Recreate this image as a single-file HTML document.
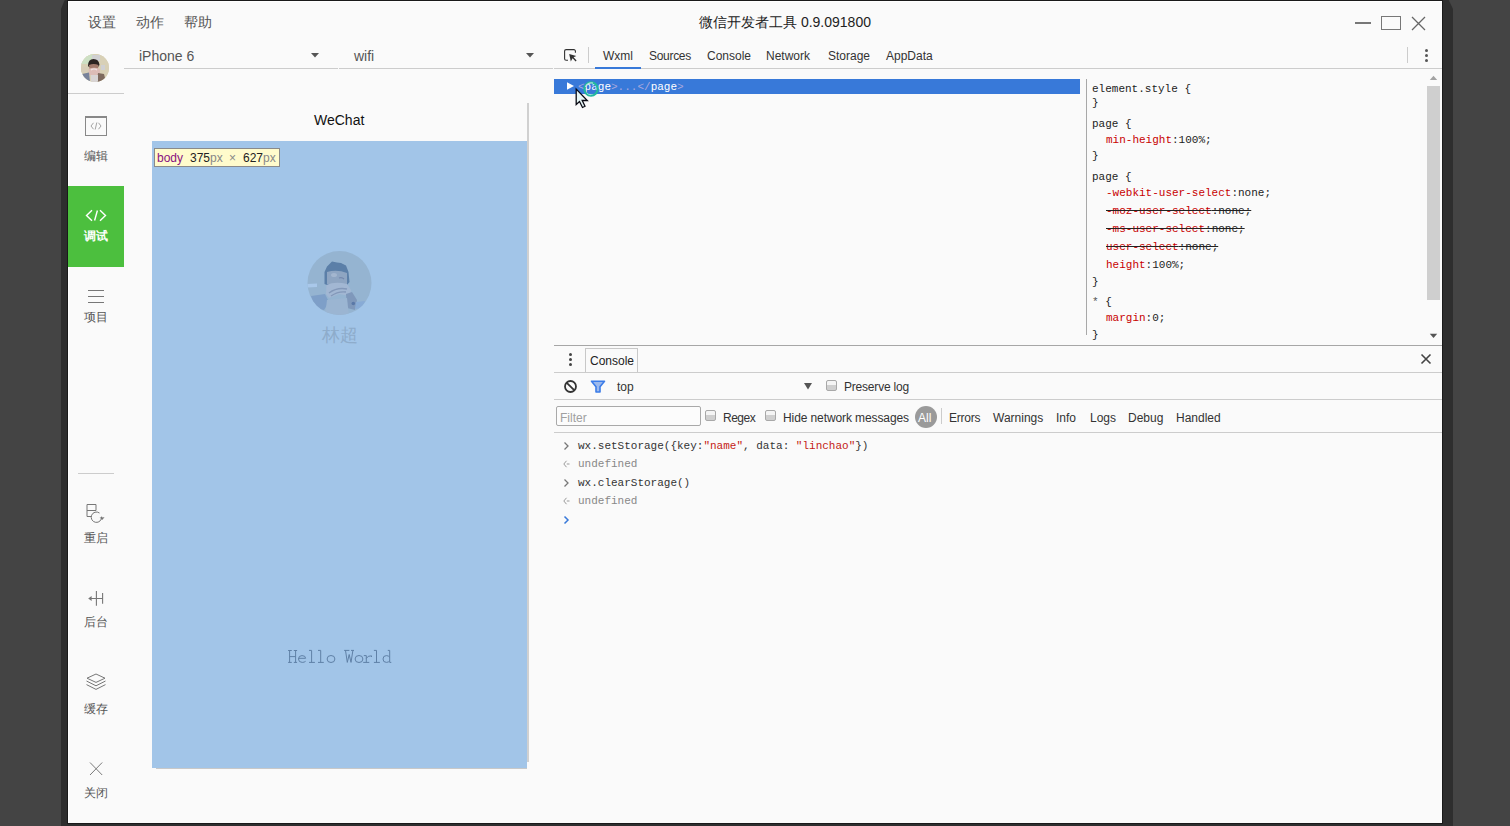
<!DOCTYPE html>
<html><head><meta charset="utf-8">
<style>
*{margin:0;padding:0;box-sizing:border-box}
html,body{width:1510px;height:826px;overflow:hidden;background:#444;font-family:"Liberation Sans",sans-serif;color:#555}
.a{position:absolute}
.t{position:absolute;white-space:nowrap;line-height:1}
.mono{font-family:"Liberation Mono",monospace}
.hl{position:absolute;height:1px;background:#ccc}
.cb{width:11px;height:11px;border:1px solid #a8a8a8;border-radius:2px;background:linear-gradient(#f4f4f4 0,#f4f4f4 45%,#cfcfcf 50%,#cfcfcf 100%)}
.vl{position:absolute;width:1px;background:#ccc}
</style></head><body>
<!-- shadow -->
<div class="a" style="left:61px;top:0;width:1392px;height:826px;background:#2e2e2e;clip-path:polygon(3.7px 0,1387.7px 0,1392px 9px,1392px 826px,0 826px,0 9px)"></div>
<!-- window -->
<div class="a" style="left:67px;top:0;width:1376px;height:824px;background:#1a1a1a"></div>
<div id="win" class="a" style="left:68px;top:1px;width:1374px;height:822px;background:#fafafa;border-left:1px solid #fff;border-top:1px solid #fff"></div>

<!-- title bar menu -->
<div class="t" style="left:88px;top:15px;font-size:14px;color:#555">设置</div>
<div class="t" style="left:136px;top:15px;font-size:14px;color:#555">动作</div>
<div class="t" style="left:184px;top:15px;font-size:14px;color:#555">帮助</div>
<div class="t" style="left:699px;top:15px;font-size:14px;color:#222">微信开发者工具 0.9.091800</div>

<!-- window controls -->
<div class="a" style="left:1355px;top:22px;width:16px;height:2px;background:#777"></div>
<div class="a" style="left:1381px;top:16px;width:20px;height:14px;border:1.5px solid #777"></div>
<svg class="a" style="left:1410px;top:15px" width="17" height="17" viewBox="0 0 17 17"><path d="M2 2L15 15M15 2L2 15" stroke="#666" stroke-width="1.3"/></svg>

<!-- avatar small -->
<div class="a" style="left:81px;top:54px;width:28px;height:28px;border-radius:50%;background:#d8d2b8;overflow:hidden"></div>
<div class="hl" style="left:68px;top:93px;width:56px"></div>

<!-- selects -->
<div class="t" style="left:139px;top:49px;font-size:14px;color:#555">iPhone 6</div>
<svg class="a" style="left:311px;top:53px" width="8" height="5"><path d="M0 0H8L4 4.5Z" fill="#555"/></svg>
<div class="hl" style="left:124px;top:68px;width:214px"></div>
<div class="t" style="left:354px;top:49px;font-size:14px;color:#555">wifi</div>
<svg class="a" style="left:526px;top:53px" width="8" height="5"><path d="M0 0H8L4 4.5Z" fill="#555"/></svg>
<div class="hl" style="left:339px;top:68px;width:214px"></div>

<!-- devtools toolbar -->
<div class="hl" style="left:554px;top:68px;width:888px"></div>
<div class="vl" style="left:588px;top:47px;height:16px"></div>
<div class="a" style="left:595px;top:67px;width:46px;height:2px;background:#3879d9"></div>
<div class="t" style="left:603px;top:50px;font-size:12px;color:#333">Wxml</div>
<div class="t" style="left:649px;top:50px;font-size:12px;color:#333;letter-spacing:-0.3px">Sources</div>
<div class="t" style="left:707px;top:50px;font-size:12px;color:#333">Console</div>
<div class="t" style="left:766px;top:50px;font-size:12px;color:#333">Network</div>
<div class="t" style="left:828px;top:50px;font-size:12px;color:#333">Storage</div>
<div class="t" style="left:886px;top:50px;font-size:12px;color:#333">AppData</div>
<div class="vl" style="left:1407px;top:47px;height:16px"></div>


<!-- inspect icon -->
<svg class="a" style="left:558px;top:44px" width="26" height="24" viewBox="0 0 26 24"><path d="M10 16.2H8.1a1.5 1.5 0 0 1-1.5-1.5V7.1a1.5 1.5 0 0 1 1.5-1.5H15.9a1.5 1.5 0 0 1 1.5 1.5V8.7" fill="none" stroke="#333" stroke-width="1.1"/><path d="M11.2 10L18.3 11.9L15.6 13.3L18.6 16.6L17.6 17.5L14.6 14.3L12.8 17.4Z" fill="#333"/></svg>
<!-- kebab top -->
<div class="a" style="left:1425px;top:49px;width:3px;height:3px;border-radius:50%;background:#555"></div>
<div class="a" style="left:1425px;top:54px;width:3px;height:3px;border-radius:50%;background:#555"></div>
<div class="a" style="left:1425px;top:59px;width:3px;height:3px;border-radius:50%;background:#555"></div>

<!-- sidebar -->
<div class="a" style="left:85px;top:116px;width:22px;height:20px;border:1.5px solid #888;border-top-width:2px"></div>
<svg class="a" style="left:90px;top:122px" width="12" height="8" viewBox="0 0 12 8"><path d="M3.5 0.8L1 4L3.5 7.2M8.5 0.8L11 4L8.5 7.2M6.8 0.5L5.2 7.5" fill="none" stroke="#999" stroke-width="0.9"/></svg>
<div class="t" style="left:84px;top:150px;font-size:12px;color:#555">编辑</div>

<div class="a" style="left:68px;top:186px;width:56px;height:81px;background:#4cbf3e"></div>
<svg class="a" style="left:84px;top:208px" width="24" height="15" viewBox="0 0 24 15"><path d="M8 2.2L2.5 7.5L8 12.8M16 2.2L21.5 7.5L16 12.8M13.4 2.5L10.6 12.5" fill="none" stroke="#fff" stroke-width="1.4"/></svg>
<div class="t" style="left:84px;top:230px;font-size:12px;color:#fff;font-weight:bold">调试</div>

<div class="a" style="left:88px;top:290px;width:16px;height:1px;background:#777"></div>
<div class="a" style="left:88px;top:296px;width:16px;height:1px;background:#777"></div>
<div class="a" style="left:88px;top:302px;width:16px;height:1px;background:#777"></div>
<div class="t" style="left:84px;top:311px;font-size:12px;color:#555">项目</div>

<div class="hl" style="left:78px;top:473px;width:36px"></div>
<svg class="a" style="left:84px;top:502px" width="24" height="24" viewBox="0 0 24 24"><path d="M3 2.5H12V8.5M3 2.5V14.5H7M3 8.5H12" fill="none" stroke="#777" stroke-width="1"/><path d="M17.6 14.6A5.2 5.2 0 1 1 15.5 11" fill="none" stroke="#777" stroke-width="1"/><path d="M15.6 15.5L20.5 15.2L18.2 18Z" fill="#777"/></svg>
<div class="t" style="left:84px;top:532px;font-size:12px;color:#555">重启</div>

<svg class="a" style="left:84px;top:588px" width="24" height="20" viewBox="0 0 24 20"><path d="M12.4 2.9V17.8M12.4 10.5H18.6M18.6 5V15.8M5 10.5H12" fill="none" stroke="#777" stroke-width="1.1"/><path d="M4.2 10.5L7.6 8V13Z" fill="#777"/></svg>
<div class="t" style="left:84px;top:616px;font-size:12px;color:#555">后台</div>

<svg class="a" style="left:84px;top:670px" width="24" height="24" viewBox="0 0 24 24"><path d="M12 4L21 8.2L12 12.4L3 8.2Z M2.5 11L12 15.8L21.5 11 M2.5 14.6L12 19.4L21.5 14.6" fill="none" stroke="#777" stroke-width="1"/></svg>
<div class="t" style="left:84px;top:703px;font-size:12px;color:#555">缓存</div>

<svg class="a" style="left:88px;top:761px" width="16" height="16" viewBox="0 0 16 16"><path d="M2 1.5L14.2 14M14.2 1.5L2 14" fill="none" stroke="#7a7a7a" stroke-width="1"/></svg>
<div class="t" style="left:84px;top:787px;font-size:12px;color:#555">关闭</div>

<!-- phone -->
<div class="t" style="left:314px;top:113px;font-size:14px;color:#111">WeChat</div>
<div class="a" style="left:527px;top:103px;width:2px;height:659px;background:#d0d0d0"></div>
<div class="a" style="left:152px;top:141px;width:375px;height:627px;background:#a2c5e8"></div>
<div class="hl" style="left:156px;top:768px;width:371px;background:#c8c8c8"></div>
<div class="a" style="left:154px;top:148px;width:126px;height:19px;background:#fffbcc;border:1px solid #8a8a8a"></div>
<div class="t" style="left:157px;top:152px;font-size:12px;color:#881280">body</div>
<div class="t" style="left:190px;top:152px;font-size:12px;color:#222">375<span style="color:#888">px</span></div>
<div class="t" style="left:229px;top:152px;font-size:12px;color:#888">×</div>
<div class="t" style="left:243px;top:152px;font-size:12px;color:#222">627<span style="color:#888">px</span></div>
<svg class="a" style="left:307px;top:250px" width="66" height="66" viewBox="0 0 66 66">
 <defs><clipPath id="cp2"><circle cx="32.5" cy="33" r="32"/></clipPath></defs>
 <g clip-path="url(#cp2)">
  <rect width="66" height="66" fill="#95b4d1"/>
  <path d="M0 34L10 33.5L10 37L0 37.5Z" fill="#a9c8ea"/>
  <path d="M4 46L18 44L22 52L17 60L8 58Z" fill="#7e9fc8"/>
  <path d="M17.5 34L17.5 22L20 16.5L25 11.5L30 12.5L34 13L39 15.5L41.5 22L42.5 32L40 35L20 35Z" fill="#5b7fa8"/>
  <path d="M20 22Q30 19 40 23L40 34Q30 37 20 34Z" fill="#8ea5c2"/>
  <ellipse cx="27" cy="25" rx="3" ry="2" fill="#a3b6cf"/>
  <path d="M32 28Q35 27 37 29" stroke="#7487ad" stroke-width="1.2" fill="none"/>
  <path d="M19.5 35Q28 31 40 34L44 40L43 46L32 44L22 48L19 44Z" fill="#a2b7d3"/>
  <path d="M22 43Q30 37 40 39M24 46Q31 41 39 42" stroke="#8398b9" stroke-width="1.3" fill="none"/>
  <path d="M39 44L45 42L50 50L48 60L40 58Z" fill="#7f98bb"/>
  <circle cx="46.3" cy="53.5" r="1.8" fill="#5a78a8"/>
  <path d="M49 52L58 51L56 58L48 59Z" fill="#88abd6"/>
  <path d="M20 50L40 48L42 66H18Z" fill="#9bb5d2"/>
 </g></svg>
<div class="t" style="left:322px;top:326px;font-size:18px;color:#8eaccb;font-family:'Liberation Serif',serif">林超</div>
<svg class="a" style="left:280px;top:640px" width="120" height="30" viewBox="280 640 120 30" fill="none" stroke="#5f80a6" stroke-width="1">
 <path d="M289.6 650.5V662.4M295.6 650.5V662.4M288.1 650.5H291.8M293.8 650.5H297.1M288.1 662.4H291.8M293.8 662.4H297.1M289.6 656.6H295.6"/>
 <path d="M298.6 658.3H305.6Q305.6 655.6 302 655.6Q298.5 655.6 298.5 659Q298.5 662.4 302.2 662.4Q304.3 662.4 305.6 661.3"/>
 <path d="M311.6 650.4V662.4M309 650.4H311.6M309 662.4H314.9"/>
 <path d="M320.7 650.4V662.4M318 650.4H320.7M318 662.4H323.8"/>
 <ellipse cx="331" cy="659" rx="3.9" ry="3.5"/>
 <path d="M344.1 650.4H349.4M351 650.4H354M345.5 650.4L347.3 662.4L349.2 654.5L351 662.4L352.9 650.4"/>
 <ellipse cx="359" cy="659" rx="3.9" ry="3.5"/>
 <path d="M363.8 655.6H366.3V662.4M363.2 662.4H369.3M366.3 658.5Q367.5 655.6 371.5 655.8V657"/>
 <path d="M376.5 650.4V662.4M373.9 650.4H376.5M373.9 662.4H379.9"/>
 <path d="M389.7 650.4V662.4H391.3M387.8 650.4H389.7M389.7 657.3Q388.6 655.6 386.4 655.6Q383 655.6 383 659Q383 662.4 386.4 662.4Q388.6 662.4 389.7 660.7"/>
</svg>

<!-- small avatar -->
<svg class="a" style="left:81px;top:54px" width="28" height="28" viewBox="0 0 28 28">
 <defs><clipPath id="cp1"><circle cx="14" cy="14" r="14"/></clipPath></defs>
 <g clip-path="url(#cp1)">
  <rect width="28" height="28" fill="#d8d0b6"/>
  <path d="M0 0H12L10 10H0Z" fill="#cde0c4"/>
  <rect x="11" y="1" width="8" height="6" fill="#d0d0d2"/>
  <rect x="20" y="11" width="4" height="5" fill="#d0d0d2"/>
  <rect x="0" y="13" width="7" height="5" fill="#d7cdb8"/>
  <path d="M7 12Q7 5 12.5 5Q18 5 18.5 11L17 13H8Z" fill="#2c2422"/>
  <path d="M8 11Q12.5 9 17.5 11L17 15Q12.5 16 8.5 15Z" fill="#a27a6c"/>
  <path d="M7.5 15Q13 12.5 19 15L19 21L8 21Z" fill="#dcbcb6"/>
  <path d="M10 16Q13 14 16 16" stroke="#f0e6e6" stroke-width="1.2" fill="none"/>
  <path d="M1 20L8 18.5L9 28H0Z" fill="#78829a"/>
  <path d="M17 19L23 20L25 28H16Z" fill="#7e6a5e"/>
  <rect x="10" y="21" width="7" height="7" fill="#d8d4d4"/>
 </g></svg>

<!-- elements panel -->
<div class="a" style="left:554px;top:79px;width:526px;height:15px;background:#3879d9"></div>
<svg class="a" style="left:566px;top:82px" width="9" height="9" viewBox="0 0 9 9"><path d="M1 0.2L8 4L1 7.8Z" fill="#fff"/></svg>
<div class="t mono" style="left:578px;top:81px;font-size:11px;line-height:13px;color:#fff"><span style="color:#aaa8dc">&lt;</span>page<span style="color:#aaa8dc">&gt;...&lt;/</span>page<span style="color:#aaa8dc">&gt;</span></div>
<svg class="a" style="left:574px;top:80px" width="30" height="30" viewBox="0 0 30 30">
 <circle cx="17" cy="9" r="6.6" fill="none" stroke="#22b89e" stroke-width="2.2"/><path d="M11.5 7A6 6 0 0 1 19 3.2" fill="none" stroke="#d8f0ee" stroke-width="1.3" opacity="0.8"/><path d="M12.5 12.5A5.5 5.5 0 0 0 17 14.8" fill="none" stroke="#9fe8dc" stroke-width="1" opacity="0.8"/>
 <path d="M2.2 9L2.2 24.5L5.5 21.5L8.5 27.5L11 26.3L8.2 20.5L13.3 20.5Z" fill="#e6f6f6" stroke="#0a0a14" stroke-width="1.3"/>
</svg>

<!-- styles -->
<div class="vl" style="left:1086px;top:79px;height:256px;background:#a8a8a8"></div>
<div id="styles" class="mono" style="position:absolute;left:0;top:0;font-size:11px;color:#222">
<div class="t" style="left:1092px;top:84px">element.style {</div>
<div class="t" style="left:1092px;top:98px">}</div>
<div class="t" style="left:1092px;top:119px">page {</div>
<div class="t" style="left:1106px;top:135px"><span style="color:#c80000">min-height</span>:100%;</div>
<div class="t" style="left:1092px;top:151px">}</div>
<div class="t" style="left:1092px;top:172px">page {</div>
<div class="t" style="left:1106px;top:188px"><span style="color:#c80000">-webkit-user-select</span>:none;</div>
<div class="t" style="left:1106px;top:206px;text-decoration:line-through"><span style="color:#c80000">-moz-user-select</span>:none;</div>
<div class="t" style="left:1106px;top:224px;text-decoration:line-through"><span style="color:#c80000">-ms-user-select</span>:none;</div>
<div class="t" style="left:1106px;top:242px;text-decoration:line-through"><span style="color:#c80000">user-select</span>:none;</div>
<div class="t" style="left:1106px;top:260px"><span style="color:#c80000">height</span>:100%;</div>
<div class="t" style="left:1092px;top:277px">}</div>
<div class="t" style="left:1092px;top:297px"><span style="color:#555">*</span> {</div>
<div class="t" style="left:1106px;top:313px"><span style="color:#c80000">margin</span>:0;</div>
<div class="t" style="left:1092px;top:330px">}</div>
</div>
<svg class="a" style="left:1429px;top:75px" width="9" height="6" viewBox="0 0 9 6"><path d="M0.8 5H8.2L4.5 0.8Z" fill="#a3a3a3"/></svg>
<div class="a" style="left:1427px;top:86px;width:13px;height:214px;background:#cfcfcf"></div>
<svg class="a" style="left:1429px;top:333px" width="9" height="6" viewBox="0 0 9 6"><path d="M0.8 0.8H8.2L4.5 5Z" fill="#555"/></svg>

<!-- drawer -->
<div class="a" style="left:554px;top:345px;width:888px;height:1px;background:#a6a6a6"></div>
<div class="a" style="left:569px;top:353px;width:3px;height:3px;border-radius:50%;background:#444"></div>
<div class="a" style="left:569px;top:358px;width:3px;height:3px;border-radius:50%;background:#444"></div>
<div class="a" style="left:569px;top:363px;width:3px;height:3px;border-radius:50%;background:#444"></div>
<div class="a" style="left:585px;top:348px;width:53px;height:25px;border:1px solid #c8c8c8;border-bottom:none;background:#fafafa"></div>
<div class="t" style="left:590px;top:355px;font-size:12px;color:#222">Console</div>
<svg class="a" style="left:1420px;top:353px" width="12" height="12" viewBox="0 0 12 12"><path d="M1.5 1.5L10.5 10.5M10.5 1.5L1.5 10.5" stroke="#444" stroke-width="1.6"/></svg>
<div class="hl" style="left:554px;top:372px;width:888px"></div>
<svg class="a" style="left:563px;top:379px" width="15" height="15" viewBox="0 0 15 15"><circle cx="7.5" cy="7.5" r="5.5" fill="none" stroke="#333" stroke-width="1.8"/><path d="M3.8 3.8L11.2 11.2" stroke="#333" stroke-width="1.8"/></svg>
<svg class="a" style="left:590px;top:380px" width="16" height="14" viewBox="0 0 16 14"><path d="M1.5 1.2H14.5L10 6.8V12H6V6.8Z" fill="#9cb9ec" stroke="#3b7ce8" stroke-width="1.6" stroke-linejoin="round"/></svg>
<div class="t" style="left:617px;top:381px;font-size:12px;color:#333">top</div>
<svg class="a" style="left:803px;top:382px" width="10" height="8" viewBox="0 0 10 8"><path d="M1 1H9L5 7.5Z" fill="#555"/></svg>
<div class="a cb" style="left:826px;top:380px"></div>
<div class="t" style="left:844px;top:381px;font-size:12px;color:#333;letter-spacing:-0.2px">Preserve log</div>
<div class="hl" style="left:554px;top:399px;width:888px"></div>
<div class="a" style="left:556px;top:406px;width:145px;height:20px;border:1px solid #a9a9a9;border-radius:2px;background:#fcfcfc"></div>
<div class="t" style="left:560px;top:412px;font-size:12px;color:#a0a0a0">Filter</div>
<div class="a cb" style="left:705px;top:410px"></div>
<div class="t" style="left:723px;top:412px;font-size:12px;color:#333;letter-spacing:-0.5px">Regex</div>
<div class="a cb" style="left:765px;top:410px"></div>
<div class="t" style="left:783px;top:412px;font-size:12px;color:#333;letter-spacing:-0.1px">Hide network messages</div>
<div class="a" style="left:915px;top:406px;width:22px;height:22px;border-radius:11px;background:#9a9a9a"></div>
<div class="t" style="left:918px;top:412px;font-size:12px;color:#fff">All</div>
<div class="vl" style="left:941px;top:408px;height:16px"></div>
<div class="t" style="left:949px;top:412px;font-size:12px;color:#333;letter-spacing:-0.25px">Errors</div>
<div class="t" style="left:993px;top:412px;font-size:12px;color:#333">Warnings</div>
<div class="t" style="left:1056px;top:412px;font-size:12px;color:#333">Info</div>
<div class="t" style="left:1090px;top:412px;font-size:12px;color:#333">Logs</div>
<div class="t" style="left:1128px;top:412px;font-size:12px;color:#333">Debug</div>
<div class="t" style="left:1176px;top:412px;font-size:12px;color:#333">Handled</div>
<div class="hl" style="left:554px;top:432px;width:888px"></div>

<!-- console -->
<svg class="a" style="left:562px;top:441px" width="9" height="10" viewBox="0 0 9 10"><path d="M2.5 1.5L6 5L2.5 8.5" fill="none" stroke="#777" stroke-width="1.3"/></svg>
<div class="t mono" style="left:578px;top:441px;font-size:11px;color:#333">wx.setStorage({key:<span style="color:#c41a16">"name"</span>, data: <span style="color:#c41a16">"linchao"</span>})</div>
<svg class="a" style="left:562px;top:459px" width="9" height="10" viewBox="0 0 9 10"><path d="M4.5 1.8L1.8 5L4.5 8.2M4.8 5H7.5" fill="none" stroke="#999" stroke-width="1"/></svg>
<div class="t mono" style="left:578px;top:459px;font-size:11px;color:#888">undefined</div>
<svg class="a" style="left:562px;top:478px" width="9" height="10" viewBox="0 0 9 10"><path d="M2.5 1.5L6 5L2.5 8.5" fill="none" stroke="#777" stroke-width="1.3"/></svg>
<div class="t mono" style="left:578px;top:478px;font-size:11px;color:#333">wx.clearStorage()</div>
<svg class="a" style="left:562px;top:496px" width="9" height="10" viewBox="0 0 9 10"><path d="M4.5 1.8L1.8 5L4.5 8.2M4.8 5H7.5" fill="none" stroke="#999" stroke-width="1"/></svg>
<div class="t mono" style="left:578px;top:496px;font-size:11px;color:#888">undefined</div>
<svg class="a" style="left:562px;top:515px" width="9" height="10" viewBox="0 0 9 10"><path d="M2.5 1.5L6 5L2.5 8.5" fill="none" stroke="#3879d9" stroke-width="1.5"/></svg>
</body></html>
